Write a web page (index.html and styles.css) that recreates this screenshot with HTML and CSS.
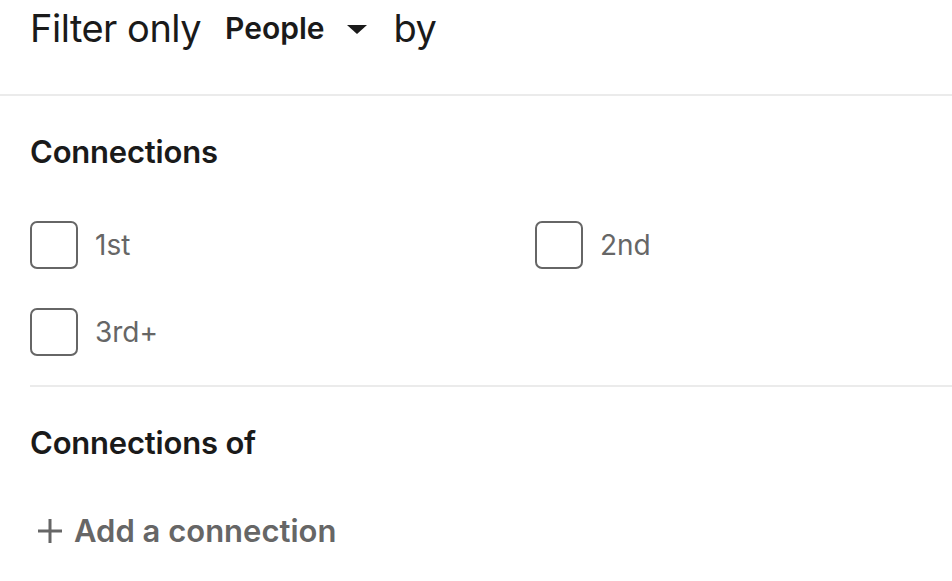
FILE: index.html
```html
<!DOCTYPE html>
<html>
<head>
<meta charset="utf-8">
<link rel="stylesheet" href="styles.css">
</head>
<body>
<div class="panel">
  <div class="header">
    <span class="lead">Filter only</span>
    <button class="select">People
      <svg class="caret" width="20" height="10" viewBox="0 0 20 10"><path d="M0 0 L20 0 L10 9 Z" fill="#1a1a1a"/></svg>
    </button>
    <span class="lead">by</span>
  </div>
  <div class="body">
    <section class="section">
      <h2 class="title">Connections</h2>
      <div class="options">
        <label class="option"><span class="box"></span><span class="label">1st</span></label>
        <label class="option"><span class="box"></span><span class="label">2nd</span></label>
        <label class="option"><span class="box"></span><span class="label">3rd+</span></label>
      </div>
    </section>
    <section class="section second">
      <h2 class="title">Connections of</h2>
      <button class="add">
        <svg class="plus" width="24" height="24" viewBox="0 0 24 24"><path d="M12 0 V24 M0 12 H24" stroke="#666" stroke-width="3"/></svg>
        <span>Add a connection</span>
      </button>
    </section>
  </div>
</div>
</body>
</html>
```
FILE: styles.css
```css
* { box-sizing: border-box; }
html, body { margin: 0; background: #fff; }
body { font-family: Inter, "Noto Sans", sans-serif; color: #1a1a1a; }
.panel { width: 952px; }
.header {
  display: flex;
  align-items: flex-start;
  height: 96px;
  padding: 5px 0 0 30px;
  border-bottom: 2px solid #ebebeb;
}
.lead { font-size: 38px; line-height: 46px; font-weight: 400; letter-spacing: -0.5px; color: #1a1a1a; }
.select {
  display: inline-flex;
  align-items: center;
  height: 46px;
  border: 0;
  background: none;
  font-family: inherit;
  font-size: 30px;
  line-height: 36px;
  font-weight: 600;
  color: #1a1a1a;
  padding: 0 0 1px;
  margin: 0 27px 0 24px;
  gap: 22px;
}
.caret { margin-top: 5px; }
.body { padding-left: 30px; }
.section { padding-top: 36px; }
.section.second { border-top: 2px solid #ebebeb; padding-top: 36px; }
.title { margin: 0; font-size: 31px; font-weight: 600; line-height: 40px; letter-spacing: -0.2px; color: #1a1a1a; }
.options {
  display: grid;
  grid-template-columns: 505px 1fr;
  row-gap: 39px;
  padding: 49px 0 29px;
}
.option { display: flex; align-items: center; gap: 17px; }
.box { width: 48px; height: 48px; border: 2px solid #666; border-radius: 7px; }
.label { font-size: 28px; color: #666; }
.add {
  display: flex;
  align-items: center;
  gap: 12px;
  border: 0;
  background: none;
  padding: 0 0 0 8px;
  margin-top: 49px;
  font-family: inherit;
  font-size: 31px;
  font-weight: 600;
  color: #666;
}
```
